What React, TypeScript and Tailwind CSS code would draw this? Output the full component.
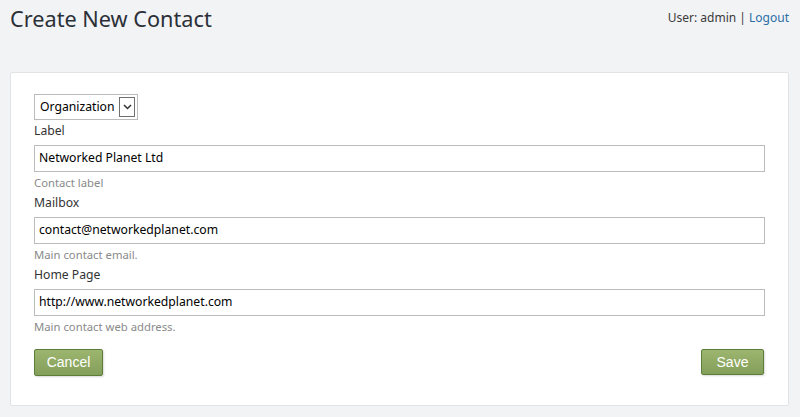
export default function App() {
  const fields = [
    { label: "Label", value: "Networked Planet Ltd", help: "Contact label" },
    { label: "Mailbox", value: "contact@networkedplanet.com", help: "Main contact email." },
    { label: "Home Page", value: "http://www.networkedplanet.com", help: "Main contact web address." },
  ];

  return (
    <div className="min-h-screen h-[417px] bg-[#f2f3f5] font-['Noto_Sans',sans-serif] text-[#333] overflow-hidden">
      {/* header */}
      <div className="flex items-start justify-between pl-[10px] pr-[11px] pt-[4px] h-[72px]">
        <h1 className="text-[21.7px] leading-[30px] text-[#2b3038]">Create New Contact</h1>
        <div className="text-[12px] leading-[20px] mt-[4px] text-[#3a3a3a]">
          User: admin | <a className="text-[#2a6ea6]">Logout</a>
        </div>
      </div>

      {/* panel */}
      <div className="ml-[10px] mr-[11px] bg-white border border-[#e1e3e6] rounded-[2px] px-[23px] pt-[21px] pb-[29px]">
        <div className="flex h-[26px] w-[104px] items-center border border-[#bcbcbc] pl-[5px] pr-[2px] text-[12.2px] text-black">
          <span className="flex-1">Organization</span>
          <span className="flex h-[20px] w-[16px] items-center justify-center border border-[#707070]">
            <svg width="9" height="6" viewBox="0 0 9 6">
              <path d="M1 1 L4.5 4.5 L8 1" fill="none" stroke="#333" strokeWidth="1.5" />
            </svg>
          </span>
        </div>

        {fields.map(f => (
          <div key={f.label} className="flex flex-col">
            <div className="text-[12.2px] leading-[18px] mt-[2px] mb-[5px] text-[#333]">{f.label}</div>
            <div className="h-[27px] border border-[#bcbcbc] px-[4px] flex items-center text-[12.2px] text-black">
              {f.value}
            </div>
            <div className="text-[11.3px] leading-[18px] text-[#8a8a8a] mt-[2px]">{f.help}</div>
          </div>
        ))}

        <div className="flex justify-between mt-[13px] pr-[1px] font-['Liberation_Sans',sans-serif]">
          <button className="h-[27px] w-[69px] rounded-[2px] border border-[#5c7e3a] bg-gradient-to-b from-[#9cb56f] to-[#849f5a] text-[14px] text-white shadow-[1px_1px_2px_rgba(0,0,0,0.15)]">
            Cancel
          </button>
          <button className="h-[26px] w-[63px] rounded-[2px] border border-[#5c7e3a] bg-gradient-to-b from-[#9cb56f] to-[#849f5a] text-[14px] text-white shadow-[1px_1px_2px_rgba(0,0,0,0.15)]">
            Save
          </button>
        </div>
      </div>
    </div>
  );
}
